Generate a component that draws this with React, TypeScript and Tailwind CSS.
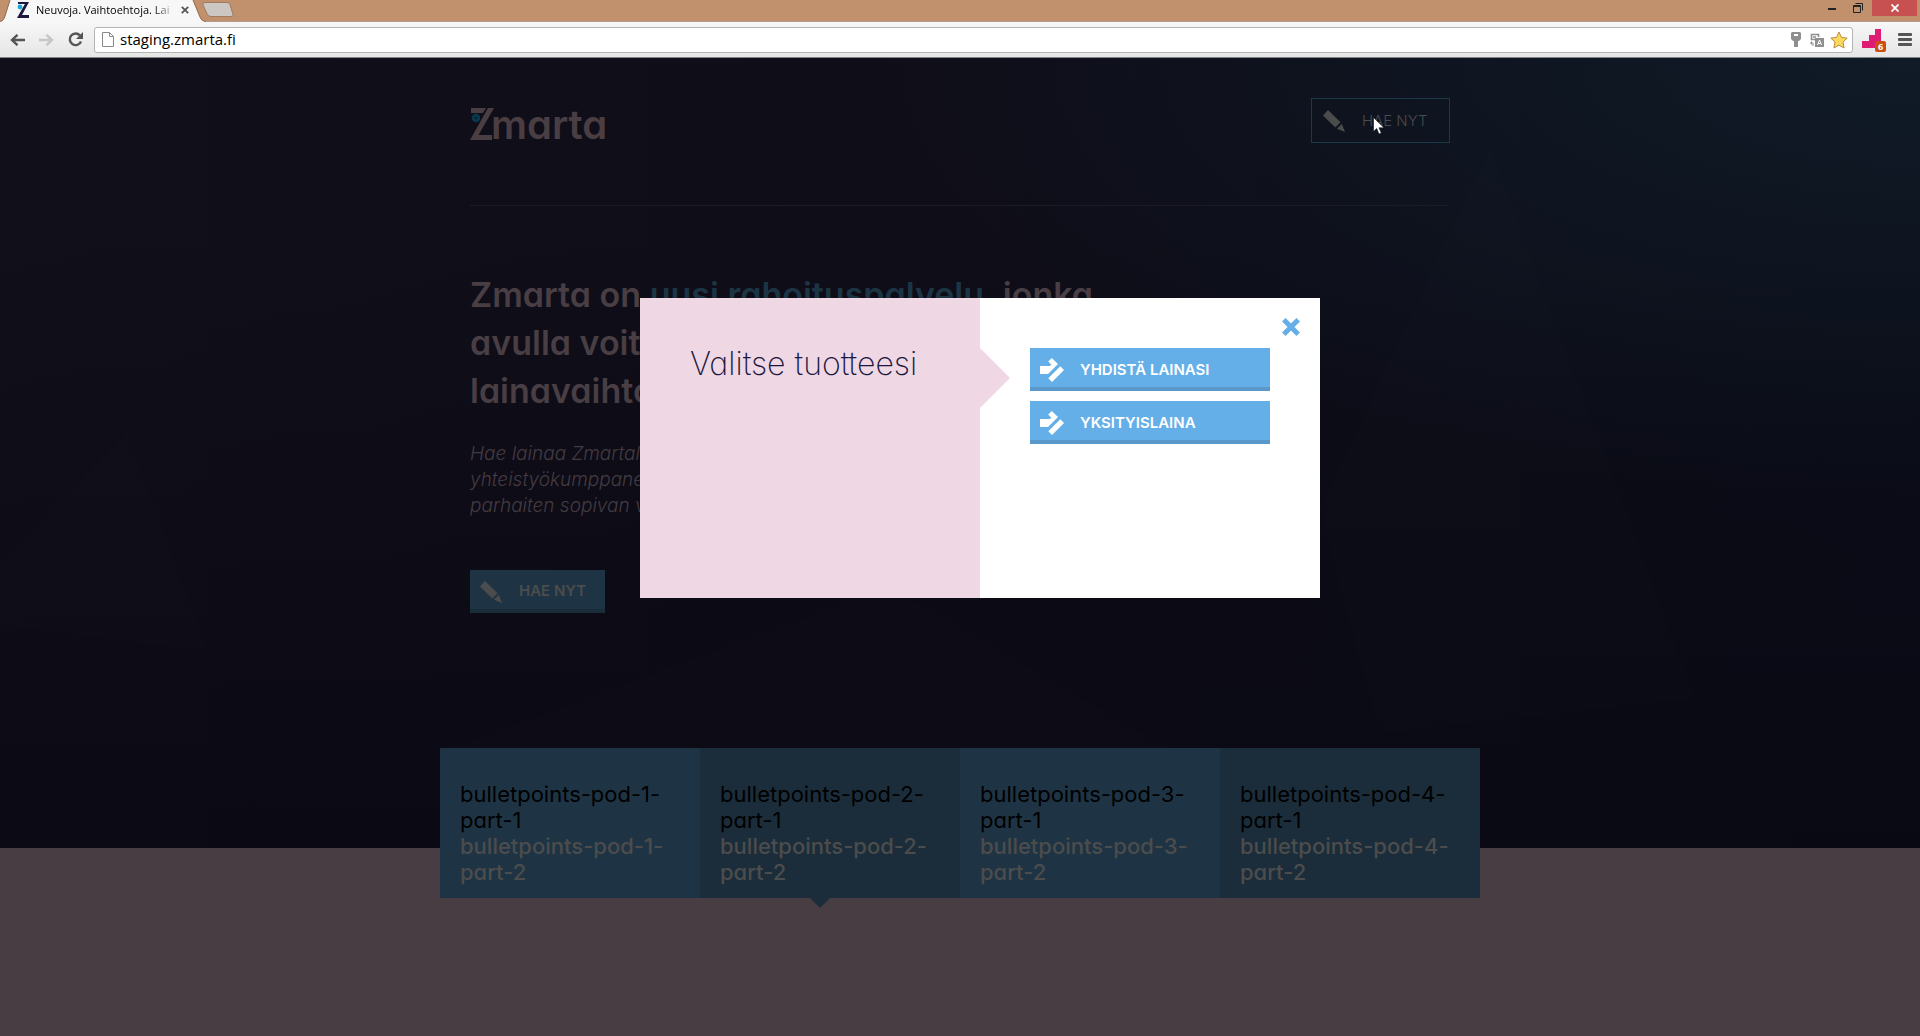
import React from 'react';

const pods = [1, 2, 3, 4];

function TabFavicon() {
  return (
    <svg className="h-4 w-3 shrink-0" viewBox="0 0 12 16" aria-hidden="true">
      <path d="M1 0h8L8 2H1z M9 0h3L5 13h7v3H0z" fill="#1b1740" />
      <circle cx="3" cy="5" r="2.4" fill="#19a7d8" />
    </svg>
  );
}

function Pencil({ className }: { className: string }) {
  return (
    <svg className={className} viewBox="0 0 22 22" fill="currentColor" aria-hidden="true">
      <path d="M0 5.5 5 0l12.5 12.3-5.2 5.2z M18.8 13.8 22 22l-8-3.2z" />
    </svg>
  );
}

function MergeIcon() {
  return (
    <svg className="size-6 shrink-0" viewBox="0 0 24 24" fill="currentColor" aria-hidden="true">
      <path d="M0 8h9.500L11.500 7 8.200 3.600 11.800 0 18 6 8 16H0z M20.300 8.300 24 12 12 24l-3.700-3.700z" />
    </svg>
  );
}

function BrowserBar() {
  return (
    <header className="h-[58px] shrink-0 border-b border-[#7f8286] bg-[#c1906c] font-['Open_Sans',sans-serif]">
      <div className="flex h-[21px] items-start">
        <div className="relative flex h-[22px] w-[206px] items-center pl-[17px]">
          <svg className="absolute inset-0 h-[22px] w-[206px]" viewBox="0 0 206 22" aria-hidden="true">
            <path d="M0 22C3 21 4 19 5 16L10 0H193L200 17C201 20 203 21 206 22z" fill="#f7f7f7" />
            <path d="M0 21.500C3 21 4 19 5 16L10 0M193 0L200 17C201 20 203 21 206 21.500" fill="none" stroke="#94694b" />
          </svg>
          <span className="relative mt-[-3px] flex items-center gap-[7px]">
            <TabFavicon />
            <span className="w-[138px] whitespace-nowrap bg-linear-to-r from-black from-85% to-black/10 bg-clip-text text-[11px] leading-4 text-transparent">
              Neuvoja. Vaihtoehtoja. Lai
            </span>
            <button aria-label="Close tab" className="size-2 text-[#555]">
              <svg viewBox="0 0 8 8" stroke="currentColor" strokeWidth="1.8">
                <path d="M.8.8l6.400 6.400M7.200.8.8 7.200" />
              </svg>
            </button>
          </span>
        </div>
        <button aria-label="New tab" className="-ml-1 mt-[2px] h-[15px] w-8">
          <svg viewBox="0 0 32 15" aria-hidden="true">
            <path d="M3 .5h22q2 0 3 2l3 10q.5 2-2 2H9q-3 0-4-3L1 3Q.5.500 3 .5z" fill="#cdc7c3" stroke="#a17a5f" />
          </svg>
        </button>
        <div className="ml-auto flex h-4 items-center">
          <button aria-label="Minimise" className="flex h-4 w-6 items-end justify-center pb-[6px]">
            <span className="h-[2px] w-2 bg-[#222]" />
          </button>
          <button aria-label="Restore" className="flex h-4 w-7 items-center justify-center">
            <svg className="size-[10px]" viewBox="0 0 10 10" fill="none" stroke="#222" aria-hidden="true">
              <path d="M.5 2.500h7v7h-7zM.5 3.500h7M2.500.5h7v7" />
            </svg>
          </button>
          <button aria-label="Close" className="mr-[3px] flex h-4 w-[45px] items-center justify-center bg-[#c75050]">
            <svg className="size-2" viewBox="0 0 8 8" stroke="#fff" strokeWidth="1.8" aria-hidden="true">
              <path d="M.5.5l7 7M7.500.5l-7 7" />
            </svg>
          </button>
        </div>
      </div>
      <div className="flex h-9 items-center border-t border-[#94694b]/60 bg-linear-to-b from-[#f7f7f7] to-[#e6e6e6] pl-[10px] pr-2">
        <button aria-label="Back" className="text-[#555]">
          <svg className="h-3 w-[15px]" viewBox="0 0 15 12" fill="none" stroke="currentColor" strokeWidth="2.400">
            <path d="M15 6H2M7.500.8 2 6l5.500 5.200" />
          </svg>
        </button>
        <button aria-label="Forward" className="ml-[14px] text-[#c6c6c6]">
          <svg className="h-3 w-[15px]" viewBox="0 0 15 12" fill="none" stroke="currentColor" strokeWidth="2.400">
            <path d="M0 6h13M7.500.8 13 6l-5.500 5.200" />
          </svg>
        </button>
        <button aria-label="Reload" className="ml-[14px] text-[#555]">
          <svg className="size-[15px]" viewBox="0 0 15 15">
            <path d="M12 3.500A5.800 5.800 0 1 0 13 9.500" fill="none" stroke="currentColor" strokeWidth="2.400" />
            <path d="M15 0v7H8z" fill="currentColor" />
          </svg>
        </button>
        <div className="ml-[11px] flex h-[26px] grow items-center rounded-[3px] border border-[#b4b4b4] bg-white pl-[7px] pr-1">
          <svg className="h-[15px] w-3" viewBox="0 0 12 15" fill="#fff" stroke="#8a8a8a" aria-hidden="true">
            <path d="M.5.5h7l4 4v10H.5zM7.500.5v4h4" />
          </svg>
          <input
            aria-label="Address"
            defaultValue="staging.zmarta.fi"
            className="ml-[6px] grow bg-transparent pb-[2px] text-[15px] leading-5 text-black outline-none"
          />
          <span className="flex items-center gap-[9px]">
            <button aria-label="Saved passwords">
              <svg className="h-[15px] w-[10px]" viewBox="0 0 10 15" fill="#8f8f8f">
                <path fillRule="evenodd" d="M1 0h8l1 1v6L8 9H7v6H3V9H2L0 7V1z M3 2v2h4V2z" />
              </svg>
            </button>
            <button aria-label="Translate">
              <svg className="size-[14px]" viewBox="0 0 14 14" fill="none" stroke="#8f8f8f">
                <path d="M5 6.500H1.500v-5h7V4M3 4h3" strokeWidth="1.600" />
                <path d="M5 5h9v9H5z" fill="#8f8f8f" stroke="none" />
                <path d="M7.500 12 9.500 7l2 5M8.300 10.500h2.400" stroke="#fff" />
                <path d="M0 10h3v3M1.500 8.500v3" />
              </svg>
            </button>
            <button aria-label="Bookmark" className="-ml-[3px]">
              <svg className="size-[18px]" viewBox="0 0 18 18">
                <path
                  d="M9 1l2.500 5.400 5.700.7-4.200 4 1.100 5.900L9 14.100 3.900 17 5 11.100.8 7.100l5.700-.7z"
                  fill="#fbd95f"
                  stroke="#bf8a3e"
                  strokeLinejoin="round"
                />
              </svg>
            </button>
          </span>
        </div>
        <button aria-label="Extension" className="relative ml-[9px] h-6 w-6">
          <svg className="absolute inset-0" viewBox="0 0 24 24" aria-hidden="true">
            <path d="M0 13h7V7h6V1h6v19H0z" fill="#df1b74" />
          </svg>
          <span className="absolute bottom-0 right-0 h-[11px] w-[11px] rounded-[2px] bg-[#cb4f10] text-center text-[9px] font-bold leading-[11px] text-white">
            6
          </span>
        </button>
        <button aria-label="Menu" className="ml-3 flex w-[14px] flex-col gap-[2px]">
          <span className="h-[3px] w-full rounded-[1px] bg-[#555]" />
          <span className="h-[3px] w-full rounded-[1px] bg-[#555]" />
          <span className="h-[3px] w-full rounded-[1px] bg-[#555]" />
        </button>
      </div>
    </header>
  );
}

function Logo() {
  return (
    <a href="#" aria-label="Zmarta" className="flex h-8 items-end text-[#4a3e43]">
      <svg className="h-8 w-6 shrink-0" viewBox="0 0 24 32" aria-hidden="true">
        <path d="M1 0h15l-3 5H1z M18 0h6L8.500 27H22v5H0z" fill="currentColor" />
        <circle cx="6" cy="10" r="4.300" fill="#07394d" />
        <circle cx="6" cy="10" r="1" fill="#100e18" />
      </svg>
      <span className="-mb-[9px] -ml-[3px] text-[40px] font-semibold leading-[48px]">marta</span>
    </a>
  );
}

function Cursor() {
  return (
    <svg className="pointer-events-none absolute left-[61px] top-[18px] h-[18px] w-3" viewBox="0 0 12 18" aria-hidden="true">
      <path d="M.5.5v14l3.200-3 2.300 5.500 2.300-1L6 10.800h5z" fill="#fff" stroke="#111" strokeWidth=".6" />
    </svg>
  );
}

function ProductDialog() {
  return (
    <div
      role="dialog"
      aria-labelledby="dialog-title"
      className="absolute left-1/3 top-[240px] z-20 grid h-[300px] w-[680px] grid-cols-2 bg-white"
    >
      <div className="relative bg-[#efd7e4] px-[50px] pt-12">
        <h2 id="dialog-title" className="whitespace-nowrap text-[32px] font-extralight leading-[36px] text-[#1b1740]">
          Valitse tuotteesi
        </h2>
        <svg className="absolute left-full top-[50px] h-[60px] w-[30px]" viewBox="0 0 30 60" aria-hidden="true">
          <path d="M0 0l30 30L0 60z" fill="#efd7e4" />
        </svg>
      </div>
      <div className="relative flex flex-col gap-[10px] px-[50px] pt-[50px]">
        <button aria-label="Sulje" className="absolute right-5 top-5 text-[#65afe8]">
          <svg className="size-[18px]" viewBox="0 0 18 18" stroke="currentColor" strokeWidth="5">
            <path d="M1.800 1.800l14.400 14.400M16.200 1.800 1.800 16.200" />
          </svg>
        </button>
        {['YHDISTÄ LAINASI', 'YKSITYISLAINA'].map((label) => (
          <button
            key={label}
            className="flex h-[43px] items-center gap-4 border-b-4 border-[#5998c9] bg-[#65afe8] px-[10px] pt-1 text-[15px] font-semibold leading-5 text-white"
          >
            <MergeIcon />
            {label}
          </button>
        ))}
      </div>
    </div>
  );
}

export default function App() {
  return (
    <div className="flex min-h-screen flex-col font-['Inter',sans-serif] [font-feature-settings:'cv11']">
      <BrowserBar />
      <div className="relative grow bg-[#483d42]">
        <main className="relative bg-[#0e0c17]">
          <svg
            className="absolute inset-0 h-full w-full"
            viewBox="0 0 1920 790"
            preserveAspectRatio="none"
            aria-hidden="true"
          >
            <defs>
              <linearGradient id="base" x1="0" y1="0" x2="1" y2="0">
                <stop offset="0" stopColor="#110f1a" />
                <stop offset=".45" stopColor="#0f0d18" />
                <stop offset="1" stopColor="#0b0d18" />
              </linearGradient>
              <radialGradient id="glow" cx="1" cy="0" r=".55">
                <stop offset="0" stopColor="#101b27" />
                <stop offset="1" stopColor="#101b27" stopOpacity="0" />
              </radialGradient>
              <linearGradient id="shade" x1="0" y1="0" x2="0" y2="1">
                <stop offset=".2" stopColor="#080711" stopOpacity="0" />
                <stop offset="1" stopColor="#080711" stopOpacity=".6" />
              </linearGradient>
            </defs>
            <path d="M0 0h1920v790H0z" fill="url(#base)" />
            <path d="M0 0h1920v790H0z" fill="url(#shade)" />
            <path d="M0 0h1920v790H0z" fill="url(#glow)" />
            <path
              d="M127 374l81 220L0 567v-60z M890 530l280 160H450z M1490 89l205 551-316 36-59-225z"
              fill="#fff"
              opacity=".008"
            />
          </svg>
          <div className="relative mx-auto w-[980px] max-w-full">
            <div className="flex h-[148px] items-start justify-between border-b border-[#1b1a25] pt-10">
              <div className="pt-[10px]">
                <Logo />
              </div>
              <button className="relative flex h-[45px] w-[139px] items-center gap-[17px] border border-[#1b3a49] pl-[11px] pt-px text-[15px] font-light text-[#4b4b4b]">
                <Pencil className="size-[22px] shrink-0" />
                HAE NYT
                <Cursor />
              </button>
            </div>
            <h1 className="whitespace-nowrap pt-[65px] text-[34px] font-semibold leading-[48px] text-[#483e44]">
              Zmarta on <span className="text-[#1c3545]">uusi rahoituspalvelu</span>, jonka
              <br />
              avulla voit vertailla
              <br />
              lainavaihtoehtoja
            </h1>
            <p className="pt-[26px] text-[19px] font-light italic leading-[26px] text-[#443b41]">
              Hae lainaa Zmartalta
              <br />
              yhteistyökumppaneilta
              <br />
              parhaiten sopivan vaihtoehdon
            </p>
            <button className="mt-[51px] flex h-[43px] w-[135px] items-center gap-[17px] border-b-4 border-[#1a2d3a] bg-[#1e3445] pl-[10px] pt-1 text-[15px] font-semibold text-[#4c4c4c]">
              <Pencil className="size-[22px] shrink-0" />
              HAE NYT
            </button>
          </div>
          <div className="relative mx-auto mt-[135px] grid w-[1040px] max-w-full grid-cols-4 text-[22px] leading-[26px]">
            {pods.map((n) => (
              <section
                key={n}
                className="relative -mb-[50px] h-[150px] bg-[#1e3444] px-5 pt-[33px] even:bg-[#1b2d3a]"
              >
                <p className="text-black">{`bulletpoints-pod-${n}-part-1`}</p>
                <p className="font-medium text-[#4c4c4c]">{`bulletpoints-pod-${n}-part-2`}</p>
                {n === 2 && (
                  <svg className="absolute left-[110px] top-full h-[10px] w-5" viewBox="0 0 20 10" aria-hidden="true">
                    <path d="M0 0h20L10 10z" fill="#1b2d3a" />
                  </svg>
                )}
              </section>
            ))}
          </div>
        </main>
        <ProductDialog />
      </div>
    </div>
  );
}
